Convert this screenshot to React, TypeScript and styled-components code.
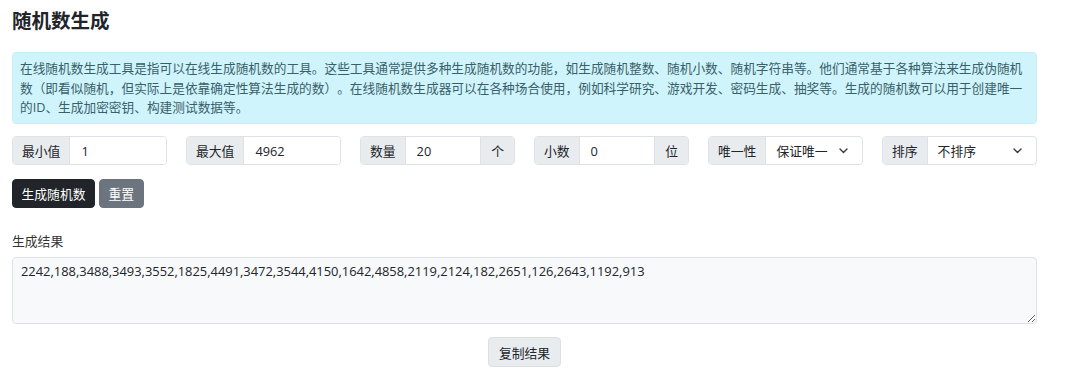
import React, { useState } from 'react';
import styled, { createGlobalStyle } from 'styled-components';

const GlobalStyle = createGlobalStyle`
  * {
    margin: 0;
    padding: 0;
    box-sizing: border-box;
  }

  body {
    font-family: 'Open Sans', 'Noto Sans CJK SC', sans-serif;
    font-size: 12.8px;
    color: #212529;
    background: #ffffff;
    text-spacing-trim: space-all;
  }
`;

const Page = styled.div`
  width: 1025px;
  margin-left: 12px;
  padding-top: 9px;
`;

const Title = styled.h1`
  font-size: 19.5px;
  font-weight: 700;
  line-height: 1.2;
  color: #212529;
  margin-bottom: 20px;
`;

const Alert = styled.div`
  background: #cff4fc;
  border: 1px solid #c4eef8;
  border-radius: 4px;
  color: #3b5f69;
  font-size: 12.7px;
  padding: 6px 7px;
  line-height: 19.3px;
  margin-bottom: 12px;
`;

const OptionRow = styled.div`
  display: grid;
  grid-template-columns: repeat(6, 1fr);
  column-gap: 19px;
  margin-bottom: 14px;
`;

const InputGroup = styled.div`
  display: flex;
  height: 29px;
  border: 1px solid #dee2e6;
  border-radius: 4px;
  overflow: hidden;
  background: #ffffff;
`;

const Addon = styled.span<{ side?: 'left' | 'right' }>`
  flex: none;
  display: flex;
  align-items: center;
  padding: 0 ${p => (p.side === 'right' ? '10px' : '9px')};
  background: #e9ecef;
  color: #212529;
  ${p => (p.side === 'right' ? 'border-left' : 'border-right')}: 1px solid #dee2e6;
`;

const Field = styled.input`
  flex: 1;
  min-width: 0;
  border: none;
  outline: none;
  padding: 0 11px;
  font: inherit;
  color: #212529;
  background: #ffffff;
`;

const SelectBox = styled.div`
  flex: 1;
  min-width: 0;
  display: flex;
  align-items: center;
  justify-content: space-between;
  padding: 0 14px 0 10px;
  color: #212529;
  cursor: pointer;
`;

const Actions = styled.div`
  display: flex;
  gap: 4px;
  margin-bottom: 24px;
`;

const Button = styled.button<{ variant: 'dark' | 'secondary' | 'light' }>`
  height: 29px;
  padding: 0 8.5px;
  font: inherit;
  border-radius: 4px;
  cursor: pointer;
  border: 1px solid
    ${p => (p.variant === 'dark' ? '#212529' : p.variant === 'secondary' ? '#6c757d' : '#dde0e3')};
  background: ${p => (p.variant === 'dark' ? '#212529' : p.variant === 'secondary' ? '#6c757d' : '#e9ecef')};
  color: ${p => (p.variant === 'light' ? '#212529' : '#ffffff')};
`;

const ResultLabel = styled.label`
  display: block;
  line-height: 19px;
  color: #333333;
  margin-bottom: 6px;
`;

const ResultArea = styled.textarea`
  display: block;
  width: 100%;
  height: 67px;
  padding: 4px 8px;
  font-family: 'Open Sans', 'Noto Sans CJK SC', sans-serif;
  font-size: 12.9px;
  line-height: 19.5px;
  color: #212529;
  background: #f8f9fa;
  border: 1px solid #dee2e6;
  border-radius: 4px;
  outline: none;
  resize: vertical;
  margin-bottom: 13px;
`;

const CopyRow = styled.div`
  display: flex;
  justify-content: center;
`;

const CopyButton = styled(Button)`
  height: 30px;
  padding: 0 10px;
`;

const Chevron = () => (
  <svg width="9" height="6" viewBox="0 0 9 6" fill="none">
    <path d="M1 1l3.5 3.5L8 1" stroke="#343a40" strokeWidth="1.4" strokeLinecap="round" strokeLinejoin="round" />
  </svg>
);

const App: React.FC = () => {
  const [min, setMin] = useState('1');
  const [max, setMax] = useState('4962');
  const [count, setCount] = useState('20');
  const [decimals, setDecimals] = useState('0');
  const result =
    '2242,188,3488,3493,3552,1825,4491,3472,3544,4150,1642,4858,2119,2124,182,2651,126,2643,1192,913';

  return (
    <Page>
      <GlobalStyle />
      <Title>随机数生成</Title>
      <Alert>
        在线随机数生成工具是指可以在线生成随机数的工具。这些工具通常提供多种生成随机数的功能，如生成随机整数、随机小数、随机字符串等。他们通常基于各种算法来生成伪随机数（即看似随机，但实际上是依靠确定性算法生成的数）。在线随机数生成器可以在各种场合使用，例如科学研究、游戏开发、密码生成、抽奖等。生成的随机数可以用于创建唯一的ID、生成加密密钥、构建测试数据等。
      </Alert>

      <OptionRow>
        <InputGroup>
          <Addon>最小值</Addon>
          <Field value={min} onChange={e => setMin(e.target.value)} />
        </InputGroup>
        <InputGroup>
          <Addon>最大值</Addon>
          <Field value={max} onChange={e => setMax(e.target.value)} />
        </InputGroup>
        <InputGroup>
          <Addon>数量</Addon>
          <Field value={count} onChange={e => setCount(e.target.value)} />
          <Addon side="right">个</Addon>
        </InputGroup>
        <InputGroup>
          <Addon>小数</Addon>
          <Field value={decimals} onChange={e => setDecimals(e.target.value)} />
          <Addon side="right">位</Addon>
        </InputGroup>
        <InputGroup>
          <Addon>唯一性</Addon>
          <SelectBox>
            <span>保证唯一</span>
            <Chevron />
          </SelectBox>
        </InputGroup>
        <InputGroup>
          <Addon>排序</Addon>
          <SelectBox>
            <span>不排序</span>
            <Chevron />
          </SelectBox>
        </InputGroup>
      </OptionRow>

      <Actions>
        <Button variant="dark">生成随机数</Button>
        <Button variant="secondary">重置</Button>
      </Actions>

      <ResultLabel>生成结果</ResultLabel>
      <ResultArea readOnly value={result} />

      <CopyRow>
        <CopyButton variant="light">复制结果</CopyButton>
      </CopyRow>
    </Page>
  );
};

export default App;
